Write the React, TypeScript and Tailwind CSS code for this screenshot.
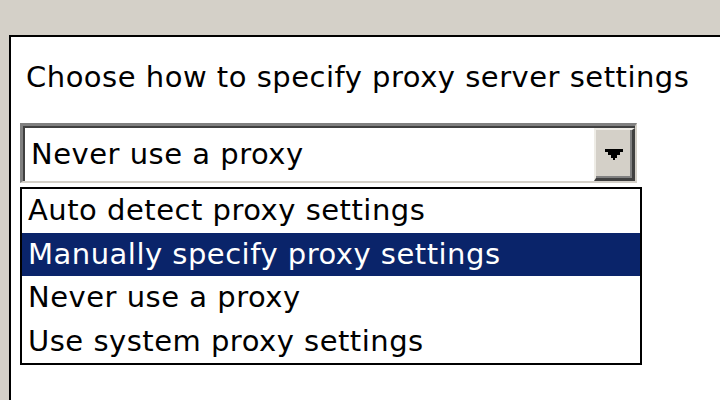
import React from "react";

const FONT = { fontFamily: '"DejaVu Sans", Tahoma, sans-serif', letterSpacing: "0.5px" };

const OPTIONS = [
  "Auto detect proxy settings",
  "Manually specify proxy settings",
  "Never use a proxy",
  "Use system proxy settings",
];

function DownArrow() {
  return (
    <svg width="18" height="11" viewBox="0 0 18 11" className="block">
      <polygon points="0,0 18,0 18,3 15,3 15,6 12,6 12,9 10,9 10,11 8,11 8,9 6,9 6,6 3,6 3,3 0,3" fill="#000" />
    </svg>
  );
}

export default function App() {
  const selected = 1;
  return (
    <div className="w-[720px] h-[400px] overflow-hidden bg-[#d4d0c8] pt-[35px] pl-[9px]" style={FONT}>
      <div className="h-[365px] bg-white border-t-2 border-l-2 border-black text-black text-[29px]">
        <div className="pl-[15px] pt-[19px] leading-[43px] whitespace-nowrap">
          Choose how to specify proxy server settings
        </div>

        {/* combo box */}
        <div className="ml-[9px] mt-[24px] w-[617px] h-[60px] border-t-[3px] border-l-[3px] border-[#808080] border-b-2 border-r-2 border-b-[#d4d0c8] border-r-[#d4d0c8] flex">
          <div className="flex-1 flex bg-white border-t-2 border-l-2 border-[#404040]">
            <div className="flex-1 pl-[6px] pt-[2px] leading-[48px] whitespace-nowrap">Never use a proxy</div>
            <div className="w-[41px] bg-[#d4d0c8] border-t-2 border-l-2 border-[#eeece6] border-b-[3px] border-r-[3px] border-b-[#404040] border-r-[#404040] shadow-[inset_-2px_-2px_0_#808080] flex items-center justify-center">
              <DownArrow />
            </div>
          </div>
        </div>

        {/* drop-down list */}
        <div className="ml-[9px] mt-[4px] w-[622px] border-2 border-black bg-white">
          {OPTIONS.map((o, i) => (
            <div
              key={o}
              className={
                "h-[43.5px] leading-[43.5px] pl-[6px] whitespace-nowrap " +
                (i === selected ? "bg-[#0a246a] text-white" : "")
              }
            >
              {o}
            </div>
          ))}
        </div>
      </div>
    </div>
  );
}
